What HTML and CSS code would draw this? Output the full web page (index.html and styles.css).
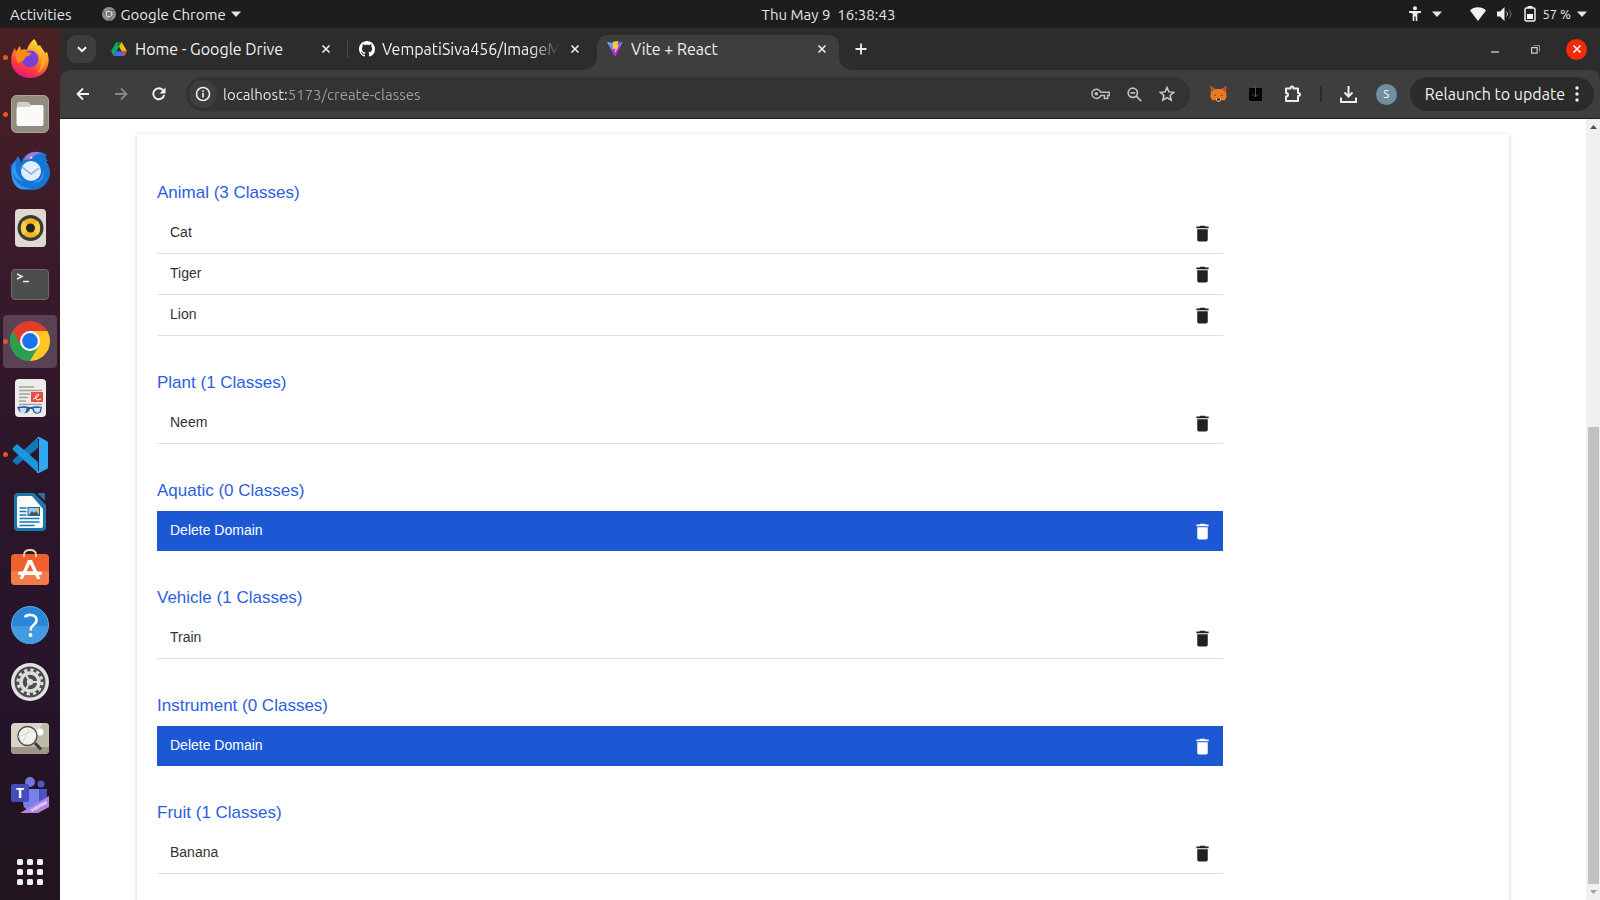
FILE: index.html
```html
<!DOCTYPE html>
<html lang="en">
<head>
<meta charset="utf-8">
<title>Vite + React</title>
<link rel="stylesheet" href="styles.css">
</head>
<body>
<svg class="defs" aria-hidden="true">
  <symbol id="trash" viewBox="0 0 24 24"><path d="M6 19c0 1.1.9 2 2 2h8c1.1 0 2-.9 2-2V7H6v12zM19 4h-3.5l-1-1h-5l-1 1H5v2h14V4z" fill="currentColor"/></symbol>
  <symbol id="close" viewBox="0 0 10 10"><path d="M1.5 1.5l7 7M8.5 1.5l-7 7" stroke="currentColor" stroke-width="1.6" fill="none"/></symbol>
  <symbol id="caret" viewBox="0 0 10 6"><path d="M0 .5h10L5 6z" fill="currentColor"/></symbol>
</svg>

<header class="panel">
  <div class="panel-left">
    <button class="plain">Activities</button>
    <button class="plain app-menu">
      <svg width="14" height="14" viewBox="0 0 14 14"><circle cx="7" cy="7" r="7" fill="#8c8c8c"/><path d="M7 3.6h6M4 8.6L1.3 4M9.800 8.800L7 14" stroke="#555" stroke-width="1"/><circle cx="7" cy="7" r="3.300" fill="#ddd"/><circle cx="7" cy="7" r="2.300" fill="#777"/></svg>
      <span>Google Chrome</span>
      <svg width="10" height="6"><use href="#caret"/></svg>
    </button>
  </div>
  <time class="clock">Thu May 9&nbsp; 16:38:43</time>
  <div class="panel-right">
    <button class="plain access" aria-label="Accessibility">
      <svg width="14" height="16" viewBox="0 0 14 16"><circle cx="7" cy="2.200" r="2" fill="#eee"/><path d="M1 5h12v1.800L9.300 7.500V15H7.700v-4.500H6.300V15H4.700V7.500L1 6.800z" fill="#eee"/></svg>
      <svg width="10" height="6"><use href="#caret"/></svg>
    </button>
    <button class="plain status" aria-label="System status">
      <span class="status-icons">
        <svg width="16" height="14" viewBox="0 0 16 14"><path d="M0 3.500C4-.8 12-.8 16 3.500L8 14z" fill="#f2f2f2"/></svg>
        <svg width="16" height="14" viewBox="0 0 16 14"><path d="M0 4.500h3L7.500 0v14L3 9.500H0z" fill="#f2f2f2"/><path d="M9.500 4.500c1.300 1.500 1.300 3.500 0 5" stroke="#bbb" fill="none"/><path d="M12 2.500c2.500 2.800 2.500 6.200 0 9" stroke="#777" fill="none"/></svg>
        <svg width="12" height="16" viewBox="0 0 12 16"><path d="M3.500 0h5v2h-5z" fill="#eee"/><rect x="1" y="2" width="10" height="13" rx="1.500" fill="none" stroke="#eee" stroke-width="1.500"/><path d="M3 8h6v5H3z" fill="#fff"/></svg>
      </span>
      <span class="charge">57 %</span>
      <svg width="10" height="6"><use href="#caret"/></svg>
    </button>
  </div>
</header>

<div class="desktop">
<nav class="dock" aria-label="Dock">
  <div class="apps">
    <button class="app running" aria-label="Firefox"><svg width="40" height="40" viewBox="0 0 40 40"><defs><linearGradient id="ff" x1=".8" y1="0" x2=".3" y2="1"><stop offset="0" stop-color="#fff04a"/><stop offset=".4" stop-color="#ff9a1f"/><stop offset=".75" stop-color="#ff3a3f"/><stop offset="1" stop-color="#e31587"/></linearGradient></defs><path d="M24 1c2 2 3 4 4 7l2-1c1 3 4 5 5 8l2-1c2 5 2 9 1 13-2 8-9 13-18 13S3 34 1.500 26C.5 20 2 14 5 10l1 4c1-2 2-4 4-6l1 4c2-1 4-1 6 0 1-5 4-8 7-11z" fill="url(#ff)"/><circle cx="20" cy="21" r="8.500" fill="#7a3fd8"/><path d="M6 14c4-3 8-2 11 0l4 1c0 3-5 3-6 5-1 4-5 2-6 6-3-3-4-8-3-12z" fill="#ff8a1c"/><path d="M26 9c5 4 7 9 5 15 2-2 3-4 3-7 3 7 0 15-7 18 5-6 6-13 2-20-2-3-3-4-3-6z" fill="#ffc23a" opacity=".7"/></svg></button>
    <button class="app running" aria-label="Files"><svg width="38" height="38" viewBox="0 0 38 38"><rect x=".5" y=".5" width="37" height="37" rx="5" fill="#918c7e" stroke="#aaa596"/><path d="M6 9q0-2 2-2h8q2 0 3 2l1 1h10q2 0 2 2v4H6z" fill="#d5d0c5"/><path d="M5.500 14q0-2 2-2H18l3-2h9.500q2 0 2 2v17q0 2-2 2h-23q-2 0-2-2z" fill="#fafafa"/></svg></button>
    <button class="app" aria-label="Thunderbird"><svg width="40" height="40" viewBox="0 0 40 40"><path d="M1 14l4-4 3-5c2 3 3 5 3 8 2-9 9-13 17-12 4 0 7 1 9 4l-2 1 3 4-2 0c4 6 5 12 3 17-3 8-9 12-17 12C9 39-1 30 1 14z" fill="#1676d8"/><path d="M14 9c3-8 12-10 18-6-5-1-8 1-10 5z" fill="#a077dc"/><path d="M6 9c-2 7 0 17 8 22-5-1-10-5-12-11 1 9 8 17 18 17C7 44-5 27 6 9z" fill="#3499ef"/><circle cx="21" cy="20" r="10" fill="#e3efff"/><path d="M12 16l9 7 8-6" stroke="#8aaedb" stroke-width="1.500" fill="none"/><path d="M33 19c1 8-4 12-10 12 8 2 12-5 10-12z" fill="#70a8f6"/><circle cx="21" cy="6.500" r="1" fill="#fff"/></svg></button>
    <button class="app" aria-label="Rhythmbox"><svg width="31" height="38" viewBox="0 0 31 38"><rect width="31" height="38" rx="4" fill="#dfdacf"/><circle cx="15.500" cy="19" r="13" fill="#3b3b3b"/><circle cx="15.500" cy="19" r="9.800" fill="#efb71d"/><path d="M15.500 19L8 12q-4 7 0 14zM15.500 19l7.500-7q4 7 0 14z" fill="#f9cf45"/><circle cx="15.500" cy="19" r="4.500" fill="#222"/></svg></button>
    <button class="app" aria-label="Terminal"><svg width="38" height="31" viewBox="0 0 38 31"><rect x=".5" y=".5" width="37" height="30" rx="3.500" fill="#4d4d4d" stroke="#6b6b6b"/><path d="M6 5l5 2.500L6 10M12 12.500h6" stroke="#eee" stroke-width="1.500" fill="none"/></svg></button>
    <button class="app running active" aria-label="Chrome"><svg width="40" height="40" viewBox="0 0 40 40"><path d="M20 20L2.700 10A20 20 0 0 1 37.300 10z" fill="#e33b2e"/><path d="M20 20L37.300 10A20 20 0 0 1 20 40z" fill="#fdc727"/><path d="M20 20L20 40A20 20 0 0 1 2.700 10z" fill="#2f9e4c"/><path d="M20 10h17.300L29 25z" fill="#fdc727"/><path d="M2.700 10l8.600 15L20 20V10z" fill="#e33b2e"/><path d="M2.700 10L11 25l9 5 8.700-5L20 40A20 20 0 0 1 2.700 10z" fill="#2f9e4c"/><circle cx="20" cy="20" r="10" fill="#fff"/><circle cx="20" cy="20" r="7.900" fill="#1a73e8"/></svg></button>
    <button class="app" aria-label="Document Viewer"><svg width="31" height="38" viewBox="0 0 31 38"><rect width="31" height="38" rx="4" fill="#ececec"/><path d="M4 8h15M4 11.500h23M4 15h11M4 18.500h9M4 22h7M4 25.500h23" stroke="#a8a396" stroke-width="1.300"/><rect x="16" y="13" width="12" height="10" fill="#ec4a3f"/><path d="M18 20c3 0 7-5 5-5s-4 6 0 6l3-1" stroke="#fff" fill="none"/><path d="M2 28c4-1 9-1 12 0h2c4-1 7-1 11 0l-1 5c-3 3-7 2-8-1l-1-2h-2l-1 2c-2 3-7 3-10 0z" fill="#235f9e"/><path d="M4.500 29h7l-1 4c-2 2-4 1-5 0zM18.500 29h7l-1 4c-2 1-4 1-5-1z" fill="#cfdfee"/></svg></button>
    <button class="app running" aria-label="Visual Studio Code"><svg width="36" height="36" viewBox="0 0 36 36"><path d="M26 0v11L5 28l-4-3q-1-1 0-2z" fill="#1478b8"/><path d="M1 11l4-4 21 18v11L1 13q-1-1 0-2z" fill="#1f95dc"/><path d="M25 1q1-1 2-1l8 4q1 1 1 2v24q0 1-1 2l-8 4q-2 0-3-1l3-1V2z" fill="#31a8f2"/></svg></button>
    <button class="app" aria-label="LibreOffice Writer"><svg width="32" height="38" viewBox="0 0 32 38"><path d="M4 0h16l12 12v22q0 4-4 4H4q-4 0-4-4V4q0-4 4-4z" fill="#1c77aa"/><path d="M5 3h13l11 13v17q0 2-2 2H5q-2 0-2-2V5q0-2 2-2z" fill="#fbfbfb"/><path d="M23 0h8v8z" fill="#27709b"/><path d="M5.500 15h7M5.500 18.500h7M5.500 22h7M5.500 25.500h20M5.500 29h20M5.500 32.500h15" stroke="#147ab3" stroke-width="1.500"/><rect x="14" y="14.500" width="11.500" height="8" fill="#8ed0ef" stroke="#26668e"/><path d="M15 22l3-4 2 2 2-2 3 4z" fill="#515151"/><circle cx="23.500" cy="16.500" r="1.500" fill="#f4b721"/></svg></button>
    <button class="app" aria-label="Ubuntu Software"><svg width="38" height="38" viewBox="0 0 38 38"><rect y="5" width="38" height="31" rx="4" fill="#f0602f"/><path d="M0 22h38v10q0 4-4 4H4q-4 0-4-4z" fill="#f37b49"/><path d="M13 8V6q0-5 6-5t6 5v2" fill="none" stroke="#ecd7ab" stroke-width="1.800"/><path d="M17 11h4l8.500 19H26l-2-4.500H14L12 30H8.500zm2 4l-3.500 7.500h7z" fill="#fff"/><rect x="7" y="22.500" width="24" height="3.500" rx="1.700" fill="#fff"/></svg></button>
    <button class="app" aria-label="Help"><svg width="38" height="38" viewBox="0 0 38 38"><circle cx="19" cy="19" r="18.500" fill="#2a87d8" stroke="#61aae5"/><path d="M1 20h36a18 18 0 0 1-36 0z" fill="#449ae0"/><path d="M13.500 11q3-2.500 6.500-2 5.500.5 5.500 5 0 3-3.500 5.500-2.500 2-2.500 5" stroke="#fff" stroke-width="2.600" fill="none"/><circle cx="19.500" cy="29" r="1.900" fill="#fff"/></svg></button>
    <button class="app" aria-label="Settings"><svg width="38" height="38" viewBox="0 0 38 38"><circle cx="19" cy="19" r="19" fill="#e2e2e2"/><circle cx="19" cy="19" r="15.500" fill="#4d4d4d"/><circle cx="19" cy="19" r="12" fill="none" stroke="#ddd" stroke-width="3" stroke-dasharray="3.200 3.080"/><circle cx="19" cy="19" r="9" fill="none" stroke="#ddd" stroke-width="3.500"/><circle cx="19" cy="19" r="3.200" fill="#ddd"/><path d="M19 19h8M19 19l-4-7M19 19l-4 7" stroke="#ddd" stroke-width="2"/></svg></button>
    <button class="app" aria-label="Image Viewer"><svg width="38" height="31" viewBox="0 0 38 31"><rect width="38" height="31" rx="4" fill="#d8d5c8"/><path d="M38 4v20H18L32 0h2q4 0 4 4z" fill="#bebba9"/><path d="M0 24h38v3q0 4-4 4H4q-4 0-4-4z" fill="#9d9885"/><circle cx="29" cy="9" r="3.500" fill="#fff"/><circle cx="16.500" cy="13" r="9.500" fill="#f1f1ed" stroke="#55534e" stroke-width="1.500"/><path d="M12 19l6-13M7 14L22 8" stroke="#dad7cc"/><path d="M24 20l6 6.500" stroke="#3f3e3b" stroke-width="3"/></svg></button>
    <button class="app" aria-label="Teams"><svg width="38" height="36" viewBox="0 0 38 36"><circle cx="19" cy="5" r="5" fill="#7077dd"/><circle cx="30" cy="7" r="3.500" fill="#4f57c4"/><path d="M27 12h9v11q0 6-6 6h-4z" fill="#4a52bd"/><path d="M12 12h16v13q0 8-8 9-8-1-8-9z" fill="#7980e8"/><rect y="7" width="18" height="18" rx="2" fill="#444cb9"/><text x="9" y="21" text-anchor="middle" class="teams-letter">T</text><path d="M9 36L38 19v11L27 36z" fill="#b184e2"/><text transform="translate(21 35) rotate(-30)" class="teams-tag">PREVIEW</text></svg></button>
  </div>
  <button class="app launcher" aria-label="Show Applications"><svg width="26" height="26" viewBox="0 0 26 26"><g fill="#efefef"><rect width="6" height="6" rx="1.500"/><rect x="10" width="6" height="6" rx="1.500"/><rect x="20" width="6" height="6" rx="1.500"/><rect y="10" width="6" height="6" rx="1.500"/><rect x="10" y="10" width="6" height="6" rx="1.500"/><rect x="20" y="10" width="6" height="6" rx="1.500"/><rect y="20" width="6" height="6" rx="1.500"/><rect x="10" y="20" width="6" height="6" rx="1.500"/><rect x="20" y="20" width="6" height="6" rx="1.500"/></g></svg></button>
</nav>

<div class="browser">
  <div class="tabstrip">
    <button class="tab-search" aria-label="Search tabs"><svg width="10" height="7" viewBox="0 0 10 7"><path d="M1 1.200l4 4 4-4" stroke="#fff" stroke-width="2" fill="none"/></svg></button>
    <div class="tab">
      <svg width="16" height="14" viewBox="0 0 16 14"><path d="M5.300 0h5.400L16 9.200h-5.200z" fill="#fbbc04"/><path d="M5.300 0L0 9.200 2.700 14 8 4.700z" fill="#11a861"/><path d="M5.300 9.200H16L13.300 14H2.700z" fill="#4269f0"/><path d="M10.700 9.200H16L13.300 14z" fill="#ea4335"/><path d="M5.300 0h5.400L8 4.700z" fill="#0b8043"/></svg>
      <span class="tab-title">Home - Google Drive</span>
      <button class="tab-close" aria-label="Close tab"><svg width="10" height="10"><use href="#close"/></svg></button>
    </div>
    <div class="tab divided">
      <svg width="16" height="16" viewBox="0 0 16 16"><path fill="#fff" d="M8 0C3.580 0 0 3.580 0 8c0 3.540 2.290 6.530 5.470 7.590.4.070.55-.17.55-.38 0-.19-.01-.82-.01-1.490-2.010.37-2.530-.49-2.690-.94-.09-.23-.48-.94-.82-1.130-.28-.15-.68-.52-.01-.53.63-.01 1.080.58 1.230.82.72 1.210 1.870.87 2.330.66.070-.52.28-.87.51-1.070-1.780-.2-3.640-.89-3.640-3.950 0-.87.31-1.590.82-2.150-.08-.2-.36-1.020.08-2.120 0 0 .67-.21 2.200.82.64-.18 1.320-.27 2-.27s1.360.09 2 .27c1.530-1.040 2.200-.82 2.200-.82.44 1.100.16 1.920.08 2.120.51.56.82 1.270.82 2.150 0 3.070-1.870 3.750-3.650 3.950.29.25.54.73.54 1.480 0 1.070-.01 1.930-.01 2.200 0 .21.15.46.55.38A8.010 8.010 0 0 0 16 8c0-4.420-3.580-8-8-8z"/></svg>
      <span class="tab-title faded">VempatiSiva456/ImageM</span>
      <button class="tab-close" aria-label="Close tab"><svg width="10" height="10"><use href="#close"/></svg></button>
    </div>
    <div class="tab current">
      <svg width="16" height="16" viewBox="0 0 16 16"><defs><linearGradient id="vt" x1="0" y1="0" x2=".6" y2="1"><stop offset="0" stop-color="#41d1ff"/><stop offset=".6" stop-color="#a33bfe"/><stop offset="1" stop-color="#bd18fe"/></linearGradient></defs><path d="M0 1l8 1.300L16 1 8 16z" fill="url(#vt)"/><path d="M6 .8L11.500 0 10 4.500l2-.5-4 8 .3-4.500L5.500 8z" fill="#ffd02a"/></svg>
      <span class="tab-title">Vite + React</span>
      <button class="tab-close" aria-label="Close tab"><svg width="10" height="10"><use href="#close"/></svg></button>
    </div>
    <button class="plain new-tab" aria-label="New tab"><svg width="12" height="12" viewBox="0 0 12 12"><path d="M6 .5v11M.5 6h11" stroke="#eee" stroke-width="1.800"/></svg></button>
    <div class="window-controls">
      <button class="plain" aria-label="Minimize"><svg width="10" height="10" viewBox="0 0 10 10"><path d="M1 8h8" stroke="#ddd" stroke-width="1.200"/></svg></button>
      <button class="plain" aria-label="Restore"><svg width="9" height="9" viewBox="0 0 9 9"><path d="M.6 2.600h5.500v5.500H.6z" stroke="#ccc" stroke-width="1.200" fill="none"/><path d="M2.500.6h6v6" stroke="#999" stroke-width="1" fill="none"/></svg></button>
      <button class="plain quit" aria-label="Close window"><svg width="10" height="10"><use href="#close"/></svg></button>
    </div>
  </div>

  <div class="toolbar">
    <div class="nav-buttons">
      <button class="plain" aria-label="Back"><svg width="14" height="14" viewBox="0 0 14 14"><path d="M13 7H2M7 1.500L1.500 7 7 12.500" stroke="#f2f2f2" stroke-width="1.800" fill="none"/></svg></button>
      <button class="plain" aria-label="Forward" disabled><svg width="14" height="14" viewBox="0 0 14 14"><path d="M1 7h11M7 1.500L12.500 7 7 12.500" stroke="#858585" stroke-width="1.800" fill="none"/></svg></button>
      <button class="plain" aria-label="Reload"><svg width="14" height="14" viewBox="0 0 14 14"><path d="M12.200 8A5.500 5.500 0 1 1 11 3.200L12.500 5" stroke="#f2f2f2" stroke-width="1.900" fill="none"/><path d="M13.500.5v6h-6z" fill="#f2f2f2"/></svg></button>
    </div>
    <div class="omnibox">
      <button class="site-info" aria-label="Site information"><svg width="16" height="16" viewBox="0 0 16 16"><circle cx="8" cy="8" r="6.500" stroke="#eee" stroke-width="1.600" fill="none"/><path d="M8 7v4.500M8 4.300v1.600" stroke="#eee" stroke-width="1.600"/></svg></button>
      <input class="url" type="text" aria-label="Address" value="localhost:5173/create-classes">
      <div class="omni-actions">
        <button class="plain" aria-label="Passwords"><svg width="19" height="12" viewBox="0 0 19 12"><path d="M9.800 4.200h8.400v3.300h-1.500v3h-3.200v-3H9.800A4.600 4.600 0 1 1 9.800 4.200z" stroke="#c0c0c0" stroke-width="1.500" fill="none"/><circle cx="5.300" cy="5.800" r="1.800" fill="#c0c0c0"/></svg></button>
        <button class="plain" aria-label="Zoom"><svg width="15" height="15" viewBox="0 0 15 15"><circle cx="5.800" cy="5.800" r="4.600" stroke="#c0c0c0" stroke-width="1.700" fill="none"/><path d="M9.200 9.200l5 5M3.500 5.800h4.600" stroke="#c0c0c0" stroke-width="1.700"/></svg></button>
        <button class="plain" aria-label="Bookmark"><svg width="16" height="16" viewBox="0 0 16 16"><path d="M8 1.500l1.900 4.400 4.800.4-3.600 3.200 1.100 4.700L8 11.700l-4.200 2.500 1.100-4.700L1.300 6.300l4.800-.4z" stroke="#cfcfcf" stroke-width="1.500" fill="none"/></svg></button>
      </div>
    </div>
    <div class="extensions">
      <button class="plain" aria-label="MetaMask"><svg width="17" height="16" viewBox="0 0 17 16"><path d="M.5 0l5 3h6l5-3-.5 5 .6 6-2 3.500-3.500-.5-2 1.500H7.900L6 14l-3.600.5L.4 11 1 5z" fill="#ec7a1c"/><path d="M.5 0l5 3-4 3zM16.500 0l-5 3 4 3z" fill="#a9562a"/><path d="M6 12.500h5L10 15.500H7z" fill="#e6d5c3"/><path d="M7 12.500h3v2H7z" fill="#222"/><path d="M4.500 8.500l2 .8-2 .6zM12.500 8.500l-2 .8 2 .6z" fill="#333"/></svg></button>
      <button class="plain" aria-label="Download helper"><svg width="13" height="16" viewBox="0 0 13 16"><rect y="2" width="13" height="13" rx="1" fill="#050505"/><path d="M6.500 0v11M3.500 8l3 3 3-3" stroke="#555" fill="none"/></svg></button>
      <button class="plain" aria-label="Extensions"><svg width="18" height="18" viewBox="0 0 18 18"><path d="M2 3.500h4.500Q6.500 1.500 8 1.500t1.500 2H14v4.500q2 0 2 1.500T14 11v5H2v-4.500q2 0 2-1.800T2 8z" stroke="#eee" stroke-width="2" fill="none" stroke-linejoin="round"/></svg></button>
    </div>
    <span class="rule"></span>
    <button class="plain downloads" aria-label="Downloads"><svg width="17" height="17" viewBox="0 0 17 17"><path d="M8.500 0v10M4.500 6.500l4 4 4-4M1 11.500V16h15v-4.500" stroke="#eee" stroke-width="2" fill="none"/></svg></button>
    <button class="avatar" aria-label="Profile">S</button>
    <button class="relaunch"><span>Relaunch to update</span><svg width="4" height="16" viewBox="0 0 4 16"><g fill="#f0f0f0"><circle cx="2" cy="2" r="1.700"/><circle cx="2" cy="8" r="1.700"/><circle cx="2" cy="14" r="1.700"/></g></svg></button>
  </div>

  <div class="viewport">
    <main class="page">
      <div class="card">
        <section class="domain">
          <h2>Animal (3 Classes)</h2>
          <ul>
            <li><span>Cat</span><button aria-label="Delete Cat"><svg width="21" height="21"><use href="#trash"/></svg></button></li>
            <li><span>Tiger</span><button aria-label="Delete Tiger"><svg width="21" height="21"><use href="#trash"/></svg></button></li>
            <li><span>Lion</span><button aria-label="Delete Lion"><svg width="21" height="21"><use href="#trash"/></svg></button></li>
          </ul>
        </section>
        <section class="domain">
          <h2>Plant (1 Classes)</h2>
          <ul><li><span>Neem</span><button aria-label="Delete Neem"><svg width="21" height="21"><use href="#trash"/></svg></button></li></ul>
        </section>
        <section class="domain">
          <h2>Aquatic (0 Classes)</h2>
          <button class="delete-domain"><span>Delete Domain</span><svg width="21" height="21"><use href="#trash"/></svg></button>
        </section>
        <section class="domain">
          <h2>Vehicle (1 Classes)</h2>
          <ul><li><span>Train</span><button aria-label="Delete Train"><svg width="21" height="21"><use href="#trash"/></svg></button></li></ul>
        </section>
        <section class="domain">
          <h2>Instrument (0 Classes)</h2>
          <button class="delete-domain"><span>Delete Domain</span><svg width="21" height="21"><use href="#trash"/></svg></button>
        </section>
        <section class="domain">
          <h2>Fruit (1 Classes)</h2>
          <ul><li><span>Banana</span><button aria-label="Delete Banana"><svg width="21" height="21"><use href="#trash"/></svg></button></li></ul>
        </section>
      </div>
    </main>
    <div class="scrollbar" aria-hidden="true">
      <svg class="arrow" width="7" height="4" viewBox="0 0 7 4"><path d="M0 4h7L3.500 0z" fill="#505050"/></svg>
      <span class="track"></span>
      <span class="thumb"></span>
      <svg class="arrow" width="7" height="4" viewBox="0 0 7 4"><path d="M0 0h7L3.500 4z" fill="#a3a3a3"/></svg>
    </div>
  </div>
</div>
</div>
</body>
</html>
```
FILE: styles.css
```css
* { box-sizing: border-box; }
body {
  margin: 0;
  height: 100vh;
  display: flex;
  flex-direction: column;
  overflow: hidden;
  background: #fff;
  color: #f0f0f0;
  font-family: Ubuntu, "Noto Sans", sans-serif;
  font-size: 15px;
}
button {
  font: inherit;
  color: inherit;
  border: 0;
  padding: 0;
  background: none;
  display: flex;
  align-items: center;
  justify-content: center;
}
svg { display: block; flex: none; }
.defs { position: absolute; width: 0; height: 0; }

/* Desktop panel */
.panel {
  flex: none;
  height: 28px;
  display: flex;
  align-items: center;
  padding: 0 13px 0 10px;
  background: #1d1d1d;
  color: #e6e6e6;
}
.panel-left, .panel-right { flex: 1; display: flex; align-items: center; }
.panel-left { gap: 30px; }
.panel-right { justify-content: flex-end; gap: 28px; }
.app-menu { gap: 5px; }
.clock { padding-left: 60px; }
.access { gap: 10px; }
.status { gap: 6px; }
.status-icons { display: flex; align-items: center; gap: 11px; }
.charge { font-size: 13px; }

/* Dock */
.desktop { flex: 1; min-height: 0; display: flex; }
.dock {
  flex: none;
  width: 60px;
  display: flex;
  flex-direction: column;
  gap: 23px;
  padding: 3px 3px 2px;
  background: linear-gradient(#4a2124, #3a1a2b 25%, #2d162a 50%, #25142a 78%, #21141c);
}
.apps { flex: 1; display: flex; flex-direction: column; justify-content: space-between; }
.app { position: relative; width: 54px; height: 53px; border-radius: 4px; }
.active { background: #594254; }
.running::before {
  content: "";
  position: absolute;
  left: 0;
  top: 24px;
  width: 5px;
  height: 5px;
  border-radius: 50%;
  background: #e95420;
}
.teams-letter { font: bold 14px "Noto Sans", sans-serif; fill: #fff; }
.teams-tag { font: bold 4px "Noto Sans", sans-serif; fill: #fff; }

/* Browser tabs */
.browser { flex: 1; min-width: 0; display: flex; flex-direction: column; background: #2c2c2c; }
.tabstrip { flex: none; height: 42px; display: flex; align-items: center; padding: 0 13px 0 7px; }
.tab-search { width: 29px; height: 28px; border-radius: 9px; background: #3d3d3d; margin-right: 5px; }
.tab {
  position: relative;
  width: 248px;
  height: 35px;
  align-self: flex-end;
  display: flex;
  align-items: center;
  gap: 8px;
  padding: 0 14px 8px 10px;
}
.tab-title { flex: 1; min-width: 0; overflow: hidden; white-space: nowrap; font-size: 16px; line-height: 20px; }
.faded { -webkit-mask-image: linear-gradient(to right, #000 84%, transparent); mask-image: linear-gradient(to right, #000 84%, transparent); }
.divided { gap: 7px; padding-right: 13px; }
.divided .tab-title { margin-right: -1px; }
.tab-close { width: 18px; height: 18px; }
.divided::before {
  content: "";
  position: absolute;
  left: -2px;
  top: 6px;
  width: 1px;
  height: 17px;
  background: #4a4a4a;
}
.current { width: 242px; padding: 0 8px 8px 10px; border-radius: 10px 10px 0 0; background: #3e3e3e; }
.current::before, .current::after {
  content: "";
  position: absolute;
  bottom: 0;
  width: 12px;
  height: 12px;
}
.current::before { left: -12px; background: radial-gradient(circle at 0 0, transparent 11px, #3e3e3e 12px); }
.current::after { right: -12px; background: radial-gradient(circle at 100% 0, transparent 11px, #3e3e3e 12px); }
.new-tab { width: 28px; height: 28px; margin-left: 8px; }
.window-controls { margin-left: auto; display: flex; align-items: center; gap: 20px; }
.window-controls button { width: 21px; height: 21px; }
.window-controls .quit { border-radius: 50%; background: #f32b06; color: #fff; }

/* Address row */
.toolbar {
  flex: none;
  height: 49px;
  display: flex;
  align-items: center;
  padding: 0 6px 0 9px;
  border-radius: 10px 10px 0 0;
  border-bottom: 1px solid #1f1f1f;
  background: #3e3e3e;
}
.nav-buttons { display: flex; gap: 10px; margin-right: 13px; }
.nav-buttons button { width: 28px; height: 28px; }
.omnibox {
  flex: 1;
  min-width: 0;
  height: 34px;
  display: flex;
  align-items: center;
  padding: 0 15px 0 3px;
  border-radius: 17px;
  background: #333;
}
.site-info { width: 28px; height: 28px; border-radius: 50%; background: #3e3e3e; }
.url {
  flex: 1;
  min-width: 0;
  margin-left: 6px;
  padding: 0;
  border: 0;
  outline: 0;
  font: inherit;
  color: transparent;
  background: linear-gradient(to right, #f0f0f0 65px, #a0a0a0 65px);
  -webkit-background-clip: text;
  background-clip: text;
}
.omni-actions { display: flex; align-items: center; gap: 17px; }
.extensions { display: flex; align-items: center; gap: 22px; margin-left: 20px; }
.rule { width: 2px; height: 16px; margin: 0 18px; background: #2b2b2b; }
.avatar {
  width: 21px;
  height: 21px;
  margin: 0 13px 0 19px;
  border-radius: 50%;
  background: #70909f;
  font-size: 11px;
  color: #fff;
}
.relaunch { height: 34px; padding: 0 15px; gap: 10px; border-radius: 17px; background: #2b2b2b; font-size: 16px; }

/* Page */
.viewport { flex: 1; min-height: 0; display: flex; background: #fff; }
.page {
  flex: 1;
  min-width: 0;
  overflow: hidden;
  padding-top: 15px;
  color: #333;
  font-family: "Liberation Sans", Arial, sans-serif;
  font-size: 14px;
}
.card {
  margin: 0 77px;
  padding: 49px 20px;
  background: #fff;
  box-shadow: 0 1px 4px rgba(0, 0, 0, .22);
}
.domain { width: 80%; margin-bottom: 37px; }
.domain h2 { margin: 0 0 10px; font-size: 17px; font-weight: 400; line-height: 20px; color: #2b60dd; }
.domain ul { margin: 0; padding: 0; list-style: none; }
.domain li, .delete-domain {
  width: 100%;
  height: 40px;
  display: flex;
  align-items: center;
  justify-content: space-between;
  padding: 0 10px 0 13px;
}
.domain li { height: 41px; border-bottom: 1px solid #dedede; }
.domain li span, .delete-domain span { padding-bottom: 2px; }
.domain li button { color: #212121; }
.delete-domain { background: #1c58d4; color: #fff; }

.scrollbar { flex: none; width: 14px; display: flex; flex-direction: column; align-items: center; background: #f0f0f0; }
.arrow { margin: 6px 0; }
.track { flex: 292; }
.thumb { flex: 458; width: 11px; background: #c1c1c1; }
```
